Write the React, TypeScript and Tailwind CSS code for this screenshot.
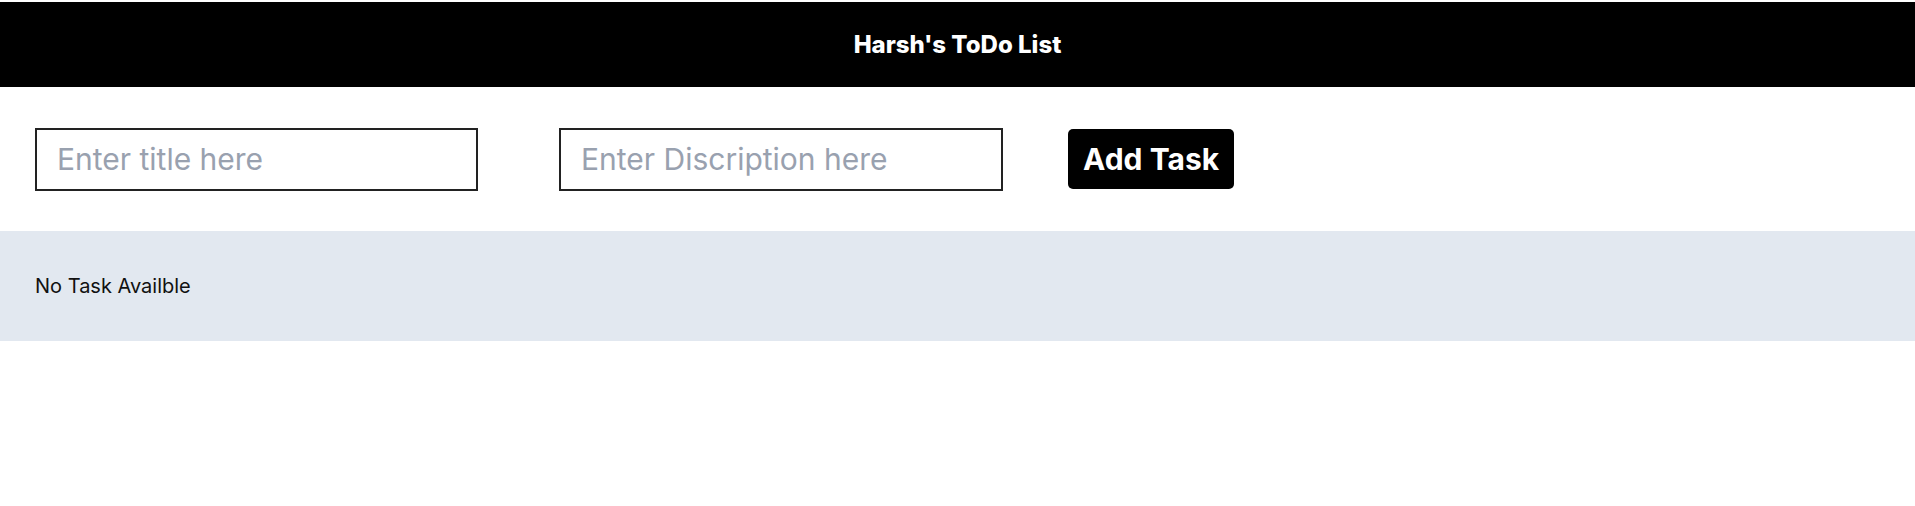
import React, { useState } from 'react';

interface Task {
  title: string;
  description: string;
}

const App: React.FC = () => {
  const [title, setTitle] = useState('');
  const [description, setDescription] = useState('');
  const [tasks, setTasks] = useState<Task[]>([]);

  const addTask = (e: React.FormEvent) => {
    e.preventDefault();
    if (!title) return;
    setTasks([...tasks, { title, description }]);
    setTitle('');
    setDescription('');
  };

  return (
    <div className="min-h-screen bg-white font-['Inter',sans-serif] pt-[2px]">
      <nav className="h-[85px] bg-black flex items-center justify-center">
        <h1 className="text-white text-2xl font-extrabold">Harsh's ToDo List</h1>
      </nav>

      <form onSubmit={addTask} className="flex items-center px-[35px] h-[144px]">
        <input
          type="text"
          value={title}
          onChange={(e) => setTitle(e.target.value)}
          placeholder="Enter title here"
          className="w-[443px] h-[63px] border-2 border-[#222] pl-5 text-3xl text-gray-900 placeholder:text-gray-400 outline-none mr-[81px]"
        />
        <input
          type="text"
          value={description}
          onChange={(e) => setDescription(e.target.value)}
          placeholder="Enter Discription here"
          className="w-[444px] h-[63px] border-2 border-[#222] pl-5 text-3xl text-gray-900 placeholder:text-gray-400 outline-none mr-[65px]"
        />
        <button
          type="submit"
          className="h-[60px] px-[15px] bg-black text-white text-3xl font-bold rounded-[5px]"
        >
          Add Task
        </button>
      </form>

      <div className="bg-slate-200 px-[35px] py-[41px] text-xl text-[#111]">
        {tasks.length === 0 ? (
          <p className="leading-7">No Task Availble</p>
        ) : (
          tasks.map((t, i) => (
            <div key={i} className="py-1">
              <h4 className="font-bold">{t.title}</h4>
              <p>{t.description}</p>
            </div>
          ))
        )}
      </div>
    </div>
  );
};

export default App;
